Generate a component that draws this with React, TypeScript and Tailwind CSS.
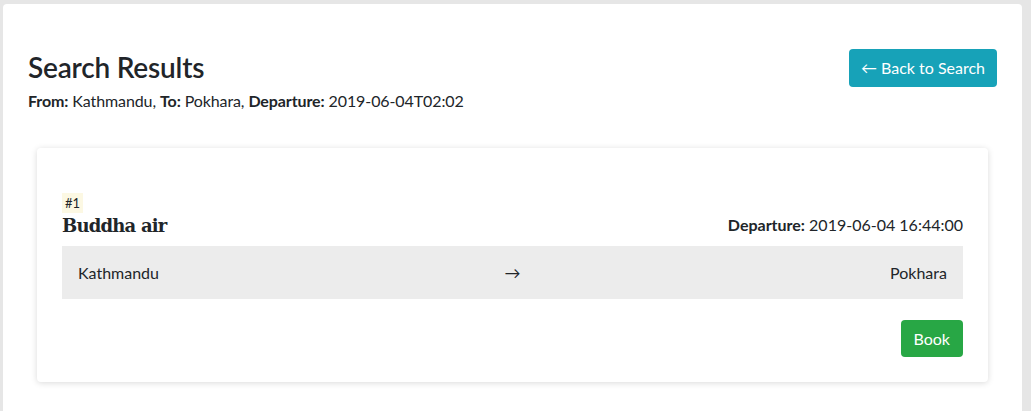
import React from 'react';

interface Flight {
  id: number;
  airline: string;
  from: string;
  to: string;
  departure: string;
}

const flights: Flight[] = [
  { id: 1, airline: 'Buddha air', from: 'Kathmandu', to: 'Pokhara', departure: '2019-06-04 16:44:00' },
];

const App: React.FC = () => {
  return (
    <div className="min-h-screen bg-[#e6e6e6] pl-[3px] pt-[4px] pr-[9px] font-['Lato','Noto_Sans',sans-serif] text-[#212529]">
      <div className="bg-white rounded-[4px] min-h-[420px] px-[25px] pt-[45px]">
        {/* Header */}
        <div className="flex items-start justify-between">
          <div>
            <h2 className="text-[28px] font-semibold leading-[36px] tracking-[-0.2px]">Search Results</h2>
            <p className="mt-[6px] text-[16px] leading-[20px] tracking-[-0.1px]">
              <span className="font-bold">From:</span> Kathmandu, <span className="font-bold">To:</span> Pokhara,{' '}
              <span className="font-bold">Departure:</span> 2019-06-04T02:02
            </p>
          </div>
          <button className="h-[38px] px-[12px] bg-[#17a2b8] text-white text-[16px] rounded-[4px]">
            ← Back to Search
          </button>
        </div>

        {/* Results */}
        <div className="mt-[37px] px-[9px] space-y-4">
          {flights.map(f => (
            <div key={f.id} className="bg-white rounded-[4px] shadow-[0_1px_6px_rgba(0,0,0,0.15)] px-[25px] pt-[42px] pb-[25px]">
              <span className="inline-block bg-[#fcf8e3] px-[3px] text-[13px] leading-[20px]">#{f.id}</span>
              <div className="flex items-end justify-between">
                <h4 className="font-['DejaVu_Serif',serif] font-bold text-[18px] leading-[24px] tracking-[-0.8px]">{f.airline}</h4>
                <p className="text-[16px] leading-[20px] mb-[3px]">
                  <span className="font-bold">Departure:</span> {f.departure}
                </p>
              </div>
              <div className="mt-[8px] h-[53px] bg-[#ececec] grid grid-cols-3 items-center px-[16px] text-[16px]">
                <span>{f.from}</span>
                <span className="text-center">→</span>
                <span className="text-right">{f.to}</span>
              </div>
              <div className="mt-[21px] flex justify-end">
                <button className="h-[37px] px-[13px] bg-[#28a745] text-white text-[16px] rounded-[4px]">Book</button>
              </div>
            </div>
          ))}
        </div>
      </div>
    </div>
  );
};

export default App;
